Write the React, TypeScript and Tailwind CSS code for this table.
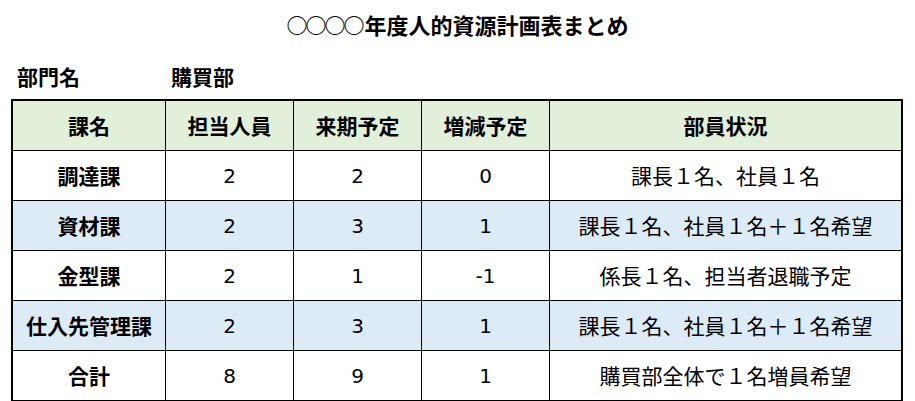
import React from "react";

type Row = {
  name: string;
  staff: string;
  next: string;
  diff: string;
  note: string;
  shaded: boolean;
};

const rows: Row[] = [
  { name: "調達課", staff: "2", next: "2", diff: "0", note: "課長１名、社員１名", shaded: false },
  { name: "資材課", staff: "2", next: "3", diff: "1", note: "課長１名、社員１名＋１名希望", shaded: true },
  { name: "金型課", staff: "2", next: "1", diff: "-1", note: "係長１名、担当者退職予定", shaded: false },
  { name: "仕入先管理課", staff: "2", next: "3", diff: "1", note: "課長１名、社員１名＋１名希望", shaded: true },
  { name: "合計", staff: "8", next: "9", diff: "1", note: "購買部全体で１名増員希望", shaded: false },
];

const headers = ["課名", "担当人員", "来期予定", "増減予定", "部員状況"];

const num = '"DejaVu Sans", "Noto Sans CJK JP", sans-serif';

const App: React.FC = () => {
  return (
    <div
      className="w-[915px] h-[401px] bg-white text-black overflow-hidden"
      style={{ fontFamily: '"Noto Sans CJK JP", "Noto Sans", sans-serif' }}
    >
      <div className="h-[48px] flex items-center justify-center text-[22px] font-bold">
        <span className="text-[21px] leading-none tracking-[-2px] mr-[2px]">○○○○</span>
        <span>年度人的資源計画表まとめ</span>
      </div>

      <div className="flex pt-[16px] pl-[17px] h-[51px] text-[21px] font-bold leading-[24px]">
        <div className="w-[154px]">部門名</div>
        <div>購買部</div>
      </div>

      <div className="ml-[11px] w-[892px] border-2 border-black bg-black grid grid-cols-[152px_127px_127px_127px_351px] auto-rows-[49px] gap-px text-[21px]">
        {headers.map((h) => (
          <div key={h} className="bg-[#e2efda] flex items-center justify-center font-bold">
            {h}
          </div>
        ))}
        {rows.map((r) => {
          const bg = r.shaded ? "bg-[#ddebf7]" : "bg-white";
          return (
            <React.Fragment key={r.name}>
              <div className={`${bg} flex items-center justify-center font-bold`}>{r.name}</div>
              <div className={`${bg} flex items-center justify-center text-[20px]`} style={{ fontFamily: num }}>{r.staff}</div>
              <div className={`${bg} flex items-center justify-center text-[20px]`} style={{ fontFamily: num }}>{r.next}</div>
              <div className={`${bg} flex items-center justify-center text-[20px]`} style={{ fontFamily: num }}>{r.diff}</div>
              <div className={`${bg} flex items-center justify-center`}>{r.note}</div>
            </React.Fragment>
          );
        })}
      </div>
    </div>
  );
};

export default App;
